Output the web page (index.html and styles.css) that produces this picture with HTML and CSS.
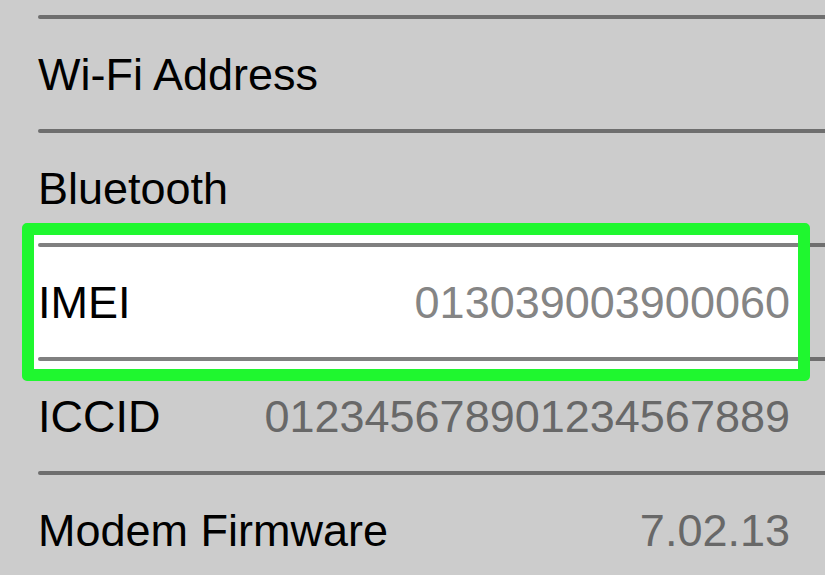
FILE: index.html
```html
<!DOCTYPE html>
<html>
<head>
<meta charset="utf-8">
<title>About</title>
<link rel="stylesheet" href="styles.css">
</head>
<body>
<div class="list">
	<div class="sep"></div>
	<div class="row"><span class="label">Wi-Fi Address</span></div>
	<div class="sep"></div>
	<div class="row"><span class="label">Bluetooth</span></div>
	<div class="mark">
		<div class="sep"></div>
		<div class="row"><span class="label">IMEI</span><span class="val">013039003900060</span></div>
		<div class="sep"></div>
	</div>
	<div class="row"><span class="label">ICCID</span><span class="val">012345678901234567889</span></div>
	<div class="sep"></div>
	<div class="row"><span class="label">Modem Firmware</span><span class="val">7.02.13</span></div>
</div>
</body>
</html>
```

FILE: styles.css
```css
* {padding:0; margin:0; box-sizing:border-box;}
html, body {background:#cccccc; overflow:hidden;}
body {width:825px; height:575px; font-family:"Liberation Sans", Arial, sans-serif;}

.list {padding-top:15px;}
.sep {height:4px; margin-left:38px; border-radius:2px 0 0 2px; background:#6e6e6e;}
.row {display:flex; justify-content:space-between; align-items:center; height:110px; line-height:108px; padding:2px 35px 0 38px; font-size:45px;}
.label {color:#000;}
.val {color:#686868;}

/* highlighted row */
.mark {position:relative; margin:-20px 15px -20px 22px; padding:8px 0; border:12px solid #1ff72f; border-radius:5px; background:#fff;}
.mark .sep {margin-left:4px; border-radius:2px 0 0 2px; background:#808080;}
.mark .row {padding:2px 8px 0 4px;}
.mark .val {color:#858585;}
.mark::before, .mark::after {content:''; position:absolute; right:-27px; width:15px; height:4px; background:#6e6e6e;}
.mark::before {top:8px;}
.mark::after {bottom:8px;}
```
